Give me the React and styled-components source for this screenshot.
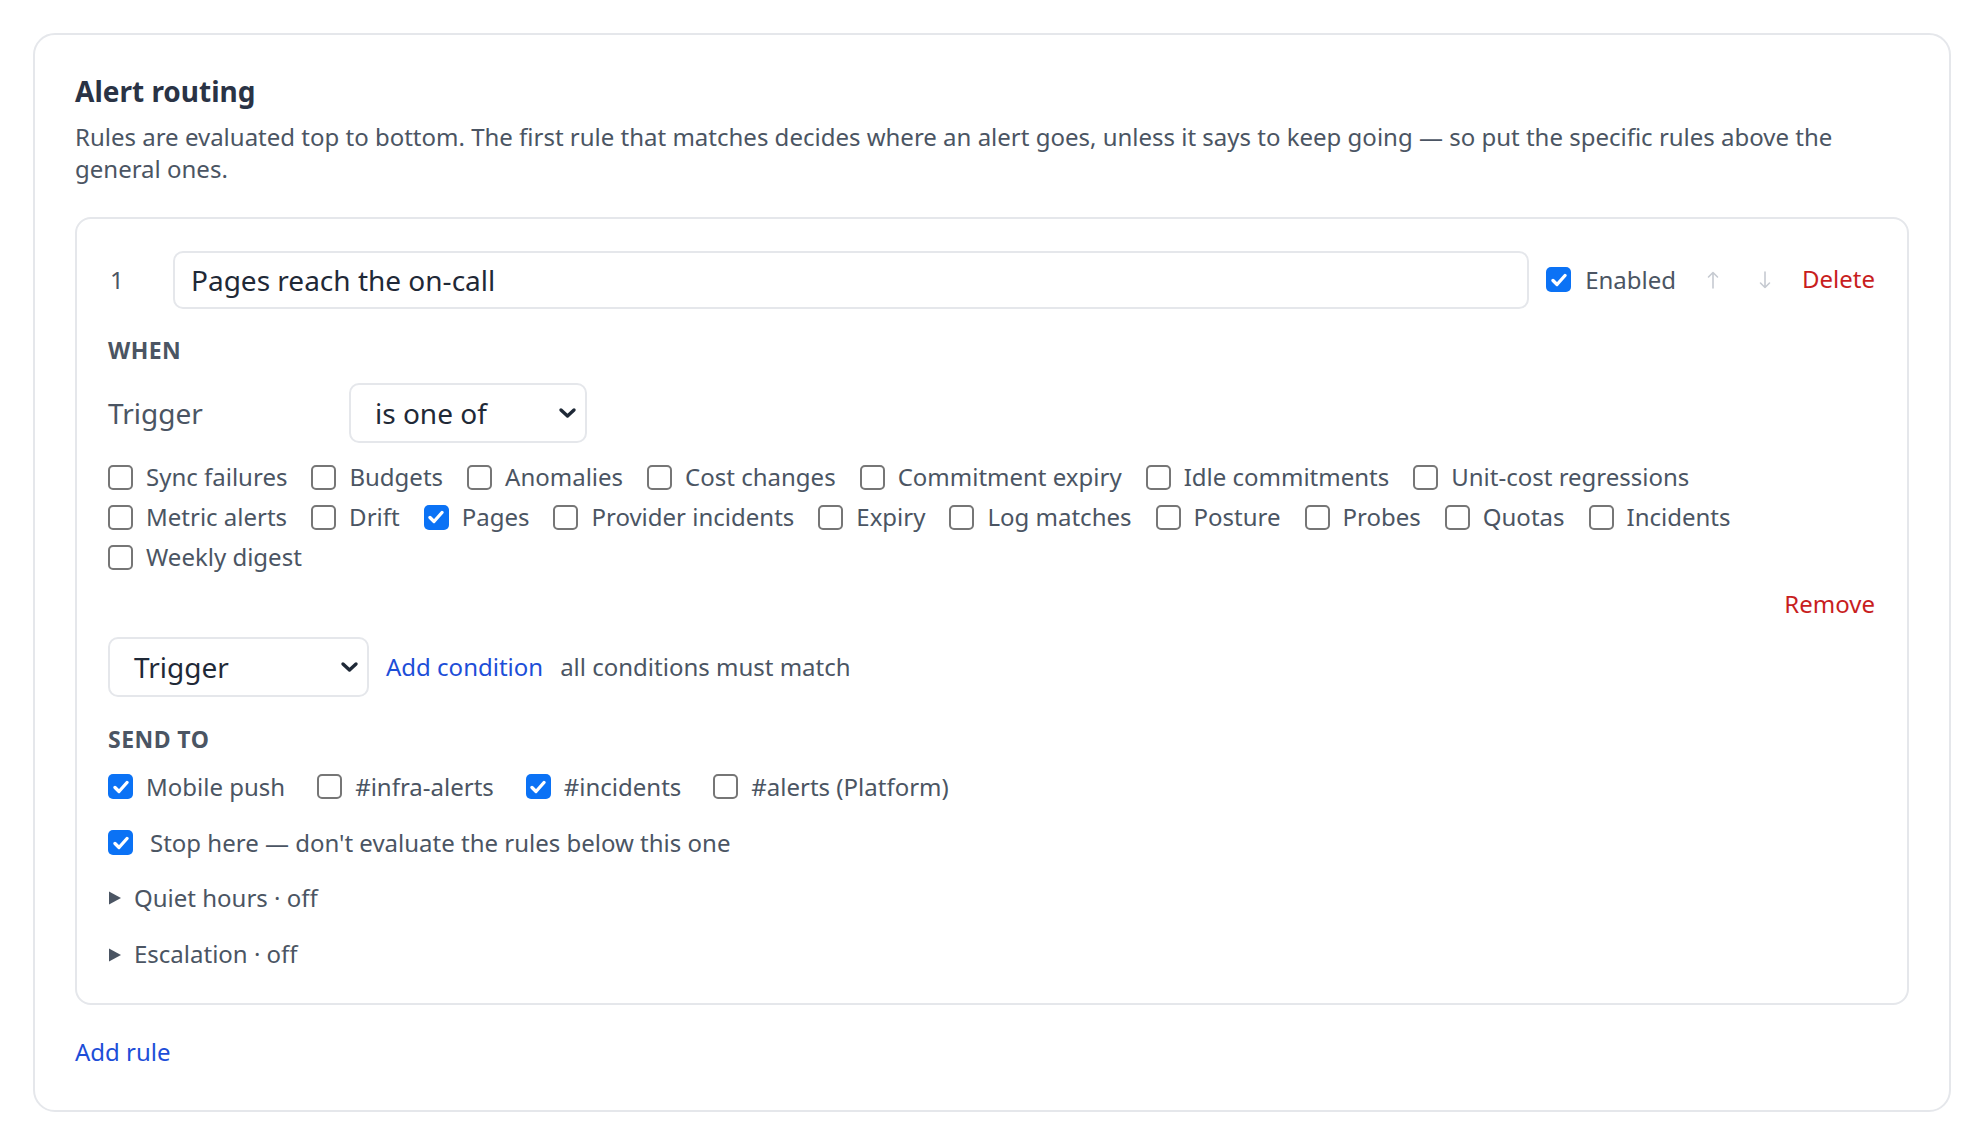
import React from "react";
import styled, { createGlobalStyle } from "styled-components";

const GlobalStyle = createGlobalStyle`
  html, body {
    margin: 0;
    padding: 0;
    background: #ffffff;
  }
  body {
    font-family: "Noto Sans", "Open Sans", sans-serif;
    color: #4b5563;
  }
  * { box-sizing: border-box; }
`;

const Page = styled.div`
  padding: 33px;
`;

const Card = styled.section`
  background: #ffffff;
  border: 2px solid #e5e7eb;
  border-radius: 22px;
  padding: 40px 40px 43px;
`;

const Title = styled.h2`
  margin: 0 0 12px;
  font-size: 28px;
  line-height: 1.2;
  font-weight: 700;
  color: #2a3345;
`;

const Description = styled.p`
  margin: 0 0 32px;
  font-size: 24px;
  line-height: 32px;
  color: #4b5563;
`;

const RuleCard = styled.div`
  border: 2px solid #e5e7eb;
  border-radius: 16px;
  padding: 32px 32px 34px 31px;
`;

const Header = styled.div`
  display: flex;
  align-items: center;
  gap: 17px;
`;

const Number = styled.span`
  width: 48px;
  flex: none;
  font-size: 24px;
  color: #4b5563;
  padding-left: 2px;
`;

const NameInput = styled.input`
  flex: 1;
  min-width: 0;
  height: 58px;
  border: 2px solid #e5e7eb;
  border-radius: 10px;
  padding: 0 16px;
  font-family: inherit;
  font-size: 28px;
  color: #1f2937;
  background: #fff;
  outline: none;
`;

const CheckLabel = styled.label`
  display: inline-flex;
  align-items: center;
  gap: ${(p) => p.$gap || 13}px;
  height: 32px;
  font-size: 24px;
  line-height: 32px;
  color: #4b5563;
  white-space: nowrap;
`;

const Box = styled.span`
  width: 25px;
  height: 25px;
  flex: none;
  border-radius: 5px;
  border: ${(p) => (p.$checked ? "none" : "2px solid #767676")};
  background: ${(p) => (p.$checked ? "#0b72f5" : "#fff")};
  display: inline-flex;
  align-items: center;
  justify-content: center;
`;

const ArrowGroup = styled.div`
  display: flex;
  align-items: center;
  gap: 12px;
`;

const ArrowButton = styled.button`
  border: none;
  background: none;
  padding: 0 14px;
  height: 32px;
  display: inline-flex;
  align-items: center;
  cursor: pointer;
`;

const DangerLink = styled.button`
  border: none;
  background: none;
  padding: 0;
  font-family: inherit;
  font-size: 24px;
  line-height: 1.2;
  color: #c81e1e;
  cursor: pointer;
`;

const SectionLabel = styled.div`
  margin: ${(p) => p.$top}px 0 ${(p) => p.$bottom}px;
  font-size: 23px;
  line-height: 1.2;
  font-weight: 700;
  letter-spacing: 0.02em;
  text-transform: uppercase;
  color: #4b5563;
`;

const FieldRow = styled.div`
  display: flex;
  align-items: center;
  gap: 16px;
`;

const FieldLabel = styled.span`
  width: 225px;
  font-size: 28px;
  color: #4b5563;
`;

const Select = styled.div`
  width: ${(p) => p.$width}px;
  height: 60px;
  flex: none;
  border: 2px solid #e5e7eb;
  border-radius: 10px;
  background: #fff;
  padding: 0 8px 0 24px;
  display: flex;
  align-items: center;
  justify-content: space-between;
  font-size: 28px;
  color: #1f2937;
`;

const CheckList = styled.div`
  margin-top: ${(p) => p.$top}px;
  display: flex;
  flex-wrap: wrap;
  row-gap: 8px;
  column-gap: ${(p) => p.$gap}px;
`;

const RemoveRow = styled.div`
  margin-top: 17px;
  display: flex;
  justify-content: flex-end;
`;

const AddRow = styled.div`
  margin-top: 18px;
  display: flex;
  align-items: center;
  gap: 17px;
`;

const LinkButton = styled.button`
  border: none;
  background: none;
  padding: 0;
  font-family: inherit;
  font-size: 24px;
  line-height: 1.2;
  color: #1d4ed8;
  cursor: pointer;
`;

const Hint = styled.span`
  font-size: 24px;
  color: #4b5563;
`;

const StopRow = styled.div`
  margin-top: 24px;
`;

const Disclosure = styled.details`
  margin-top: ${(p) => p.$top}px;
`;

const Summary = styled.summary`
  list-style: none;
  display: flex;
  align-items: center;
  gap: 12px;
  font-size: 24px;
  line-height: 1.2;
  color: #4b5563;
  cursor: pointer;
  &::-webkit-details-marker { display: none; }
`;

const AddRule = styled(LinkButton)`
  margin-top: 33px;
  display: block;
`;

const CheckMark = () => (
  <svg width="16" height="14" viewBox="0 0 16 14" fill="none">
    <path d="M2 7.5 L6 11.5 L14 2.5" stroke="#fff" strokeWidth="3.3" strokeLinecap="round" strokeLinejoin="round" />
  </svg>
);

const Checkbox = ({ label, checked, gap }) => (
  <CheckLabel $gap={gap}>
    <Box $checked={checked}>{checked && <CheckMark />}</Box>
    {label}
  </CheckLabel>
);

const Chevron = () => (
  <svg width="19" height="12" viewBox="0 0 19 12" fill="none">
    <path d="M3 3 L9.5 9 L16 3" stroke="#1f2937" strokeWidth="3.4" strokeLinecap="round" strokeLinejoin="round" />
  </svg>
);

const UpArrow = () => (
  <svg width="12" height="18" viewBox="0 0 12 18" fill="none">
    <path d="M6 1.5 V17 M1.5 6 L6 1.5 L10.5 6" stroke="#c6cad1" strokeWidth="1.6" strokeLinecap="round" strokeLinejoin="round" />
  </svg>
);

const DownArrow = () => (
  <svg width="12" height="18" viewBox="0 0 12 18" fill="none">
    <path d="M6 1 V16.5 M1.5 12 L6 16.5 L10.5 12" stroke="#c6cad1" strokeWidth="1.6" strokeLinecap="round" strokeLinejoin="round" />
  </svg>
);

const Triangle = () => (
  <svg width="14" height="14" viewBox="0 0 14 14">
    <polygon points="1,0.5 13,7 1,13.5" fill="#4b5563" />
  </svg>
);

const triggers = [
  ["Sync failures", false],
  ["Budgets", false],
  ["Anomalies", false],
  ["Cost changes", false],
  ["Commitment expiry", false],
  ["Idle commitments", false],
  ["Unit-cost regressions", false],
  ["Metric alerts", false],
  ["Drift", false],
  ["Pages", true],
  ["Provider incidents", false],
  ["Expiry", false],
  ["Log matches", false],
  ["Posture", false],
  ["Probes", false],
  ["Quotas", false],
  ["Incidents", false],
  ["Weekly digest", false],
];

const destinations = [
  ["Mobile push", true],
  ["#infra-alerts", false],
  ["#incidents", true],
  ["#alerts (Platform)", false],
];

export default function App() {
  return (
    <>
      <GlobalStyle />
      <Page>
        <Card>
          <Title>Alert routing</Title>
          <Description>
            Rules are evaluated top to bottom. The first rule that matches decides where an alert goes,
            unless it says to keep going — so put the specific rules above the general ones.
          </Description>

          <RuleCard>
            <Header>
              <Number>1</Number>
              <NameInput defaultValue="Pages reach the on-call" />
              <Checkbox label="Enabled" checked gap={14} />
              <ArrowGroup>
                <ArrowButton aria-label="Move up"><UpArrow /></ArrowButton>
                <ArrowButton aria-label="Move down"><DownArrow /></ArrowButton>
              </ArrowGroup>
              <DangerLink>Delete</DangerLink>
            </Header>

            <SectionLabel $top={28} $bottom={19}>When</SectionLabel>
            <FieldRow>
              <FieldLabel>Trigger</FieldLabel>
              <Select $width={238}>
                <span>is one of</span>
                <Chevron />
              </Select>
            </FieldRow>
            <CheckList $top={18} $gap={24}>
              {triggers.map(([label, checked]) => (
                <Checkbox key={label} label={label} checked={checked} />
              ))}
            </CheckList>
            <RemoveRow>
              <DangerLink>Remove</DangerLink>
            </RemoveRow>

            <AddRow>
              <Select $width={261}>
                <span>Trigger</span>
                <Chevron />
              </Select>
              <LinkButton>Add condition</LinkButton>
              <Hint>all conditions must match</Hint>
            </AddRow>

            <SectionLabel $top={29} $bottom={17}>Send to</SectionLabel>
            <CheckList $top={0} $gap={32}>
              {destinations.map(([label, checked]) => (
                <Checkbox key={label} label={label} checked={checked} />
              ))}
            </CheckList>
            <StopRow>
              <Checkbox label="Stop here — don't evaluate the rules below this one" checked gap={17} />
            </StopRow>

            <Disclosure $top={25}>
              <Summary>
                <Triangle />
                Quiet hours · off
              </Summary>
            </Disclosure>
            <Disclosure $top={28}>
              <Summary>
                <Triangle />
                Escalation · off
              </Summary>
            </Disclosure>
          </RuleCard>

          <AddRule>Add rule</AddRule>
        </Card>
      </Page>
    </>
  );
}
